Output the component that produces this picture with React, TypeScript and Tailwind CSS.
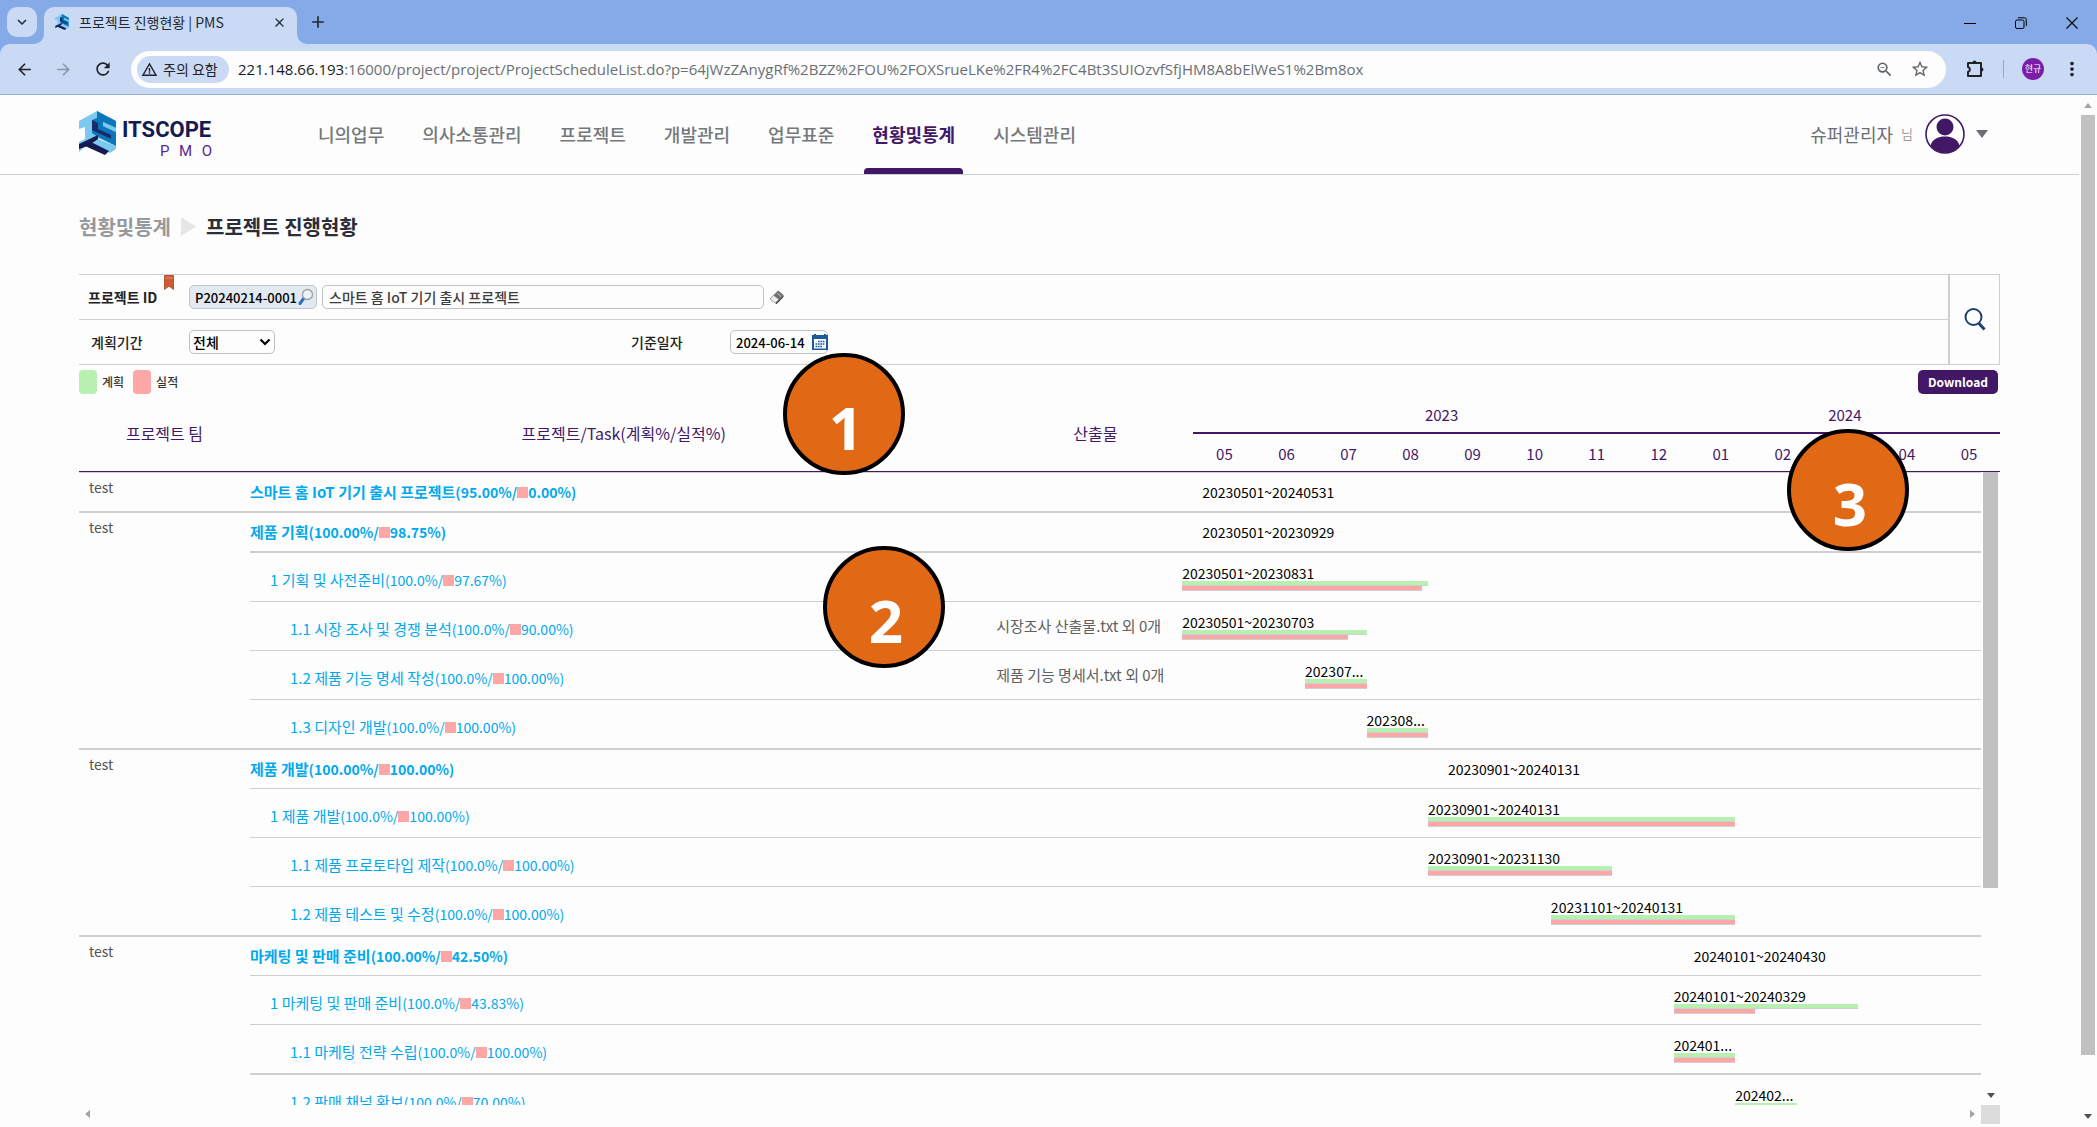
import React from "react";
import {
  MdArrowBack,
  MdArrowForward,
  MdClose,
  MdKeyboardArrowDown,
  MdAdd,
  MdMoreVert,
  MdRefresh,
  MdStarBorder,
  MdWarningAmber,
  MdZoomOut,
} from "react-icons/md";

const KR = "font-['Noto_Sans_CJK_KR','Noto_Sans',sans-serif]";

function CubeMark({ className }: { className: string }) {
  return (
    <svg viewBox="0 0 37 44" className={className} aria-hidden="true">
      <path d="M0 10 L18 0 L37 10 V35 L19 27 L13 29 L0 41 V31 L6 28 V16 L0 18 Z" fill="#7cc8f0" />
      <path d="M18 0 L37 10 L37 17 L24 11 L24 15 L37 21 L37 35 L19 26 L13 22 L13 9 L18 7 Z" fill="#0a77b8" />
      <path d="M13 9 L19 12 L19 18 L32 24 L32 28 L13 19 Z" fill="#1a2a6c" />
      <path d="M24 11 L37 17 L37 21 L24 15 Z" fill="#7cc8f0" />
      <path d="M0 33 L19 24 L19 29 L6 36 L0 38 Z" fill="#141b52" />
      <path d="M19 28 L37 35 L37 38 L31 42 L19 36 L12 33 Z" fill="#7cc8f0" />
      <path d="M12 31 L30 40 L26 44 L6 35 Z" fill="#141b52" />
    </svg>
  );
}

function TabStrip() {
  return (
    <div className="flex h-11 items-end bg-[#84abe8] text-[#1f2937]">
      <button aria-label="탭 검색" className="mb-[7px] ml-[7px] flex h-[30px] w-[30px] items-center justify-center rounded-[10px] bg-[#cadaf5]">
        <MdKeyboardArrowDown size={18} />
      </button>
      <div className="relative ml-[7px] flex h-[37px] w-[253px] items-center rounded-t-[10px] bg-[#cadaf5] pr-[10px] pb-[7px] pl-[11px]">
        <svg viewBox="0 0 10 10" className="absolute bottom-0 -left-[10px] h-[10px] w-[10px]" aria-hidden="true">
          <path d="M10 0 V10 H0 A10 10 0 0 0 10 0 Z" fill="#cadaf5" />
        </svg>
        <svg viewBox="0 0 10 10" className="absolute -right-[10px] bottom-0 h-[10px] w-[10px]" aria-hidden="true">
          <path d="M0 0 V10 H10 A10 10 0 0 1 0 0 Z" fill="#cadaf5" />
        </svg>
        <CubeMark className="h-4 w-[14px]" />
        <span className="ml-[10px] flex-1 text-sm">프로젝트 진행현황 | PMS</span>
        <button aria-label="탭 닫기" className="flex h-4 w-4 items-center justify-center">
          <MdClose size={15} />
        </button>
      </div>
      <button aria-label="새 탭" className="mb-3 ml-[11px]">
        <MdAdd size={20} />
      </button>
      <div className="mr-[16px] mb-3 ml-auto flex items-center gap-[33px] text-black">
        <button aria-label="최소화" className="flex h-[18px] w-[18px] items-center justify-center">
          <span className="h-px w-3 bg-black" />
        </button>
        <button aria-label="이전 크기로 복원" className="flex h-[18px] w-[18px] items-center justify-center">
          <svg viewBox="0 0 12 12" className="h-3 w-3" fill="none" stroke="currentColor">
            <rect x="0.5" y="3" width="8.5" height="8.5" rx="1.5" />
            <path d="M3 0.8 H9.5 A1.8 1.8 0 0 1 11.3 2.6 V9" />
          </svg>
        </button>
        <button aria-label="닫기" className="flex h-[18px] w-[18px] items-center justify-center">
          <svg viewBox="0 0 12 12" className="h-3 w-3" fill="none" stroke="currentColor" strokeWidth="1.1">
            <path d="M0.5 0.5 L11.5 11.5 M11.5 0.5 L0.5 11.5" />
          </svg>
        </button>
      </div>
    </div>
  );
}

function Toolbar() {
  return (
    <div className="bg-[#84abe8]">
      <div className="flex h-[51px] items-center rounded-t-[10px] border-b border-[#9badd6] bg-[#cadaf5] pr-[14px] pl-[15px] text-[#1f2328]">
        <button aria-label="뒤로">
          <MdArrowBack size={19} />
        </button>
        <button aria-label="앞으로" className="ml-5 text-[#8a96ad]">
          <MdArrowForward size={19} />
        </button>
        <button aria-label="새로고침" className="ml-5">
          <MdRefresh size={20} />
        </button>
        <div className="ml-[18px] flex h-[37px] min-w-0 flex-1 items-center rounded-full bg-[#fdfdfd] pr-4 pl-[6px]">
          <button className="flex h-[27px] w-[92px] shrink-0 items-center gap-[5px] rounded-full bg-[#cadaf5] pl-1 text-sm">
            <MdWarningAmber size={17} />
            주의 요함
          </button>
          <p className="ml-[9px] min-w-0 flex-1 truncate font-['Open_Sans','Noto_Sans',sans-serif] text-[15px] text-[#6b6f75]">
            <span className="text-[#1b1b1f]">221.148.66.193</span>
            :16000/project/project/ProjectScheduleList.do?p=64jWzZAnygRf%2BZZ%2FOU%2FOXSrueLKe%2FR4%2FC4Bt3SUIOzvfSfjHM8A8bElWeS1%2Bm8ox
          </p>
          <button aria-label="축소" className="text-[#5f6368]">
            <MdZoomOut size={19} />
          </button>
          <button aria-label="북마크" className="ml-4 text-[#5f6368]">
            <MdStarBorder size={20} />
          </button>
        </div>
        <button aria-label="확장 프로그램" className="ml-[19px]">
          <svg viewBox="0 0 20 20" className="h-5 w-5" fill="none" stroke="currentColor" strokeWidth="2" strokeLinejoin="round">
            <path d="M3 4 H16 V17 H3 V13 A2.6 2.6 0 0 0 3 8 Z" />
            <path d="M7.5 3.5 A2 2 0 0 1 11.5 3.5 Z M16.5 8.5 A2 2 0 0 1 16.5 12.5 Z" fill="currentColor" stroke="none" />
          </svg>
        </button>
        <span className="ml-[18px] h-[18px] w-px bg-[#84abe8]" />
        <button className="ml-[18px] flex h-[22px] w-[22px] items-center justify-center rounded-full bg-[#7a1ea8] text-[9px] text-white">현규</button>
        <button aria-label="메뉴" className="ml-[17px]">
          <MdMoreVert size={22} />
        </button>
      </div>
    </div>
  );
}

const NAV = ["니의업무", "의사소통관리", "프로젝트", "개발관리", "업무표준", "현황및통계", "시스템관리"];
const ACTIVE = "현황및통계";

function Header() {
  return (
    <header className="flex h-20 items-center border-b border-[#cdd0d0] px-[79px]">
      <a href="#" aria-label="ITSCOPE PMO" className="flex w-[134px] items-start">
        <CubeMark className="h-[44px] w-[37px]" />
        <span className="ml-[6px] w-[90px] pt-[5px]">
          <span className="block font-['Liberation_Sans_Narrow','Roboto',sans-serif] text-[22px] leading-[28px] font-bold text-[#151a50]">ITSCOPE</span>
          <span className="ml-[38px] flex justify-between font-['Roboto',sans-serif] text-[15px] leading-[14px] text-[#5c2391]">
            <span>P</span>
            <span>M</span>
            <span>O</span>
          </span>
        </span>
      </a>
      <nav className="ml-[97px] h-full">
        <ul className="flex h-full gap-[22px]">
          {NAV.map((item) => (
            <li key={item} className="relative">
              <a
                href="#"
                className={
                  item === ACTIVE
                    ? "flex h-full items-center px-2 pb-0.5 text-lg font-bold text-[#421866]"
                    : "flex h-full items-center px-2 pb-0.5 text-lg font-medium text-[#74787c]"
                }
              >
                {item}
              </a>
              {item === ACTIVE && <span className="absolute inset-x-0 bottom-0 h-[6px] rounded-t bg-[#421866]" />}
            </li>
          ))}
        </ul>
      </nav>
      <button className="mr-3 ml-auto flex items-center pb-0.5 text-[#6b6e72]">
        <span className="text-lg">슈퍼관리자</span>
        <span className="ml-2 text-[13px] text-[#9a9da0]">님</span>
        <svg viewBox="0 0 40 40" className="ml-3 h-10 w-10" aria-hidden="true">
          <circle cx="20" cy="20" r="19" fill="#fff" stroke="#421866" strokeWidth="1.6" />
          <ellipse cx="20" cy="13" rx="8.5" ry="8.5" fill="#421866" />
          <path d="M5.5 32 C7 25 13 22.5 20 22.5 C27 22.5 33 25 34.5 32 A19 19 0 0 1 5.5 32 Z" fill="#421866" />
        </svg>
        <svg viewBox="0 0 12 8" className="ml-[11px] h-2 w-3" aria-hidden="true">
          <path d="M0 0 H12 L6 8 Z" fill="#6b6e72" />
        </svg>
      </button>
    </header>
  );
}

function SearchForm() {
  return (
    <form className="flex border border-l-0 border-[#cdd0d0] text-sm font-medium text-[#222]">
      <div className="flex-1">
        <div className="flex h-[45px] items-center border-b border-[#cdd0d0]">
          <div className="relative w-[110px] pl-[9px]">
            <label htmlFor="pid" className="font-bold">
              프로젝트 ID
            </label>
            <svg viewBox="0 0 10 15" className="absolute top-[-12px] right-[15px] h-[15px] w-[10px]" aria-hidden="true">
              <path d="M0.5 0.5 H9.5 V14.5 L5 11 L0.5 14.5 Z" fill="#cf5a33" stroke="#a8401f" strokeWidth="0.8" />
              <path d="M1 3 H9" stroke="#e58a63" />
            </svg>
          </div>
          <div className="relative w-32">
            <input id="pid" readOnly defaultValue="P20240214-0001" className="h-6 w-full rounded-[5px] border border-[#bfc5ca] bg-[#e2e9f0] pl-[5px] text-[13px] text-black" />
            <svg viewBox="0 0 16 18" className="absolute top-[3px] right-[3px] h-[18px] w-4" aria-hidden="true">
              <path d="M6 10 L2 15.5" stroke="#2f6fc0" strokeWidth="3" strokeLinecap="round" />
              <circle cx="9.5" cy="6.5" r="5" fill="#eef2f5" stroke="#9aa0a6" strokeWidth="1.3" />
            </svg>
          </div>
          <input aria-label="프로젝트명" defaultValue="스마트 홈 IoT 기기 출시 프로젝트" className="ml-[5px] h-6 w-[442px] rounded-[5px] border border-[#bfc1c4] bg-[#fdfdfd] pl-[6px] text-[#3d3d3d]" />
          <button type="button" aria-label="지우기" className="ml-[5px]">
            <svg viewBox="0 0 16 16" className="h-4 w-4" aria-hidden="true">
              <path d="M1 10 L9 1.5 L14.5 6 L6.5 14 Z" fill="#6e6e6e" />
              <path d="M1 10 L4.5 6.2 L10 10.6 L6.5 14 Z" fill="#efefef" stroke="#8a8a8a" strokeWidth="0.7" />
              <path d="M6.5 14 L14.5 6 V8 L7.5 15.3 Z" fill="#444" />
              <path d="M8 4 L12 7.5" stroke="#c9c9c9" />
            </svg>
          </button>
        </div>
        <div className="flex h-11 items-center">
          <label htmlFor="period" className="w-[110px] pl-3">
            계획기간
          </label>
          <span className="relative w-[86px]">
            <select id="period" className="h-6 w-full appearance-none rounded-[5px] border border-[#bfc1c4] bg-[#fdfdfd] pl-[3px] font-medium text-black">
              <option>전체</option>
            </select>
            <svg viewBox="0 0 12 8" className="pointer-events-none absolute top-2 right-[4px] h-2 w-3" fill="none" stroke="#000" strokeWidth="2.2" aria-hidden="true">
              <path d="M1.5 1.5 L6 6 L10.5 1.5" />
            </svg>
          </span>
          <label htmlFor="base" className="ml-[356px] w-[99px]">
            기준일자
          </label>
          <div className="relative w-[98px]">
            <input id="base" defaultValue="2024-06-14" className="h-6 w-full rounded-[5px] border border-[#bfc1c4] bg-[#fdfdfd] pl-[5px] text-[13px] text-black" />
            <svg viewBox="0 0 16 16" className="absolute top-1 right-0 h-4 w-4" aria-hidden="true">
              <rect x="0" y="1" width="16" height="15" fill="#1d5a9c" />
              <path d="M3 0 V2 M13 0 V2" stroke="#1d5a9c" strokeWidth="2" />
              <rect x="2" y="5" width="12" height="9.5" fill="#fff" />
              <path d="M6 7.5 H13 M3.5 10 H13 M3.5 12.5 H10" stroke="#1d5a9c" strokeWidth="1.6" strokeDasharray="1.7 0.7" />
            </svg>
          </div>
        </div>
      </div>
      <button type="button" aria-label="조회" className="flex w-[51px] items-center justify-center border-l-2 border-[#cdd0d0]">
        <svg viewBox="0 0 22 24" className="h-6 w-[22px]" fill="none" stroke="#1f3f6e" aria-hidden="true">
          <circle cx="9.5" cy="9" r="8" strokeWidth="2" />
          <path d="M15 15.5 L20.5 21.5" strokeWidth="3" />
        </svg>
      </button>
    </form>
  );
}

const MONTHS = ["05", "06", "07", "08", "09", "10", "11", "12", "01", "02", "03", "04", "05"];

type Task = {
  level: number;
  name: string;
  plan: string;
  done: string;
  file?: string;
  dates: string;
  start: number;
  span: number;
  thick?: boolean;
};

const TEAMS: { team: string; tasks: Task[] }[] = [
  {
    team: "test",
    tasks: [{ level: 0, name: "스마트 홈 IoT 기기 출시 프로젝트", plan: "95.00", done: "0.00", dates: "20230501~20240531", start: 0, span: 13 }],
  },
  {
    team: "test",
    tasks: [
      { level: 0, name: "제품 기획", plan: "100.00", done: "98.75", dates: "20230501~20230929", start: 0, span: 5, thick: true },
      { level: 1, name: "1 기획 및 사전준비", plan: "100.0", done: "97.67", dates: "20230501~20230831", start: 0, span: 4 },
      { level: 2, name: "1.1 시장 조사 및 경쟁 분석", plan: "100.0", done: "90.00", file: "시장조사 산출물.txt 외 0개", dates: "20230501~20230703", start: 0, span: 3 },
      { level: 2, name: "1.2 제품 기능 명세 작성", plan: "100.0", done: "100.00", file: "제품 기능 명세서.txt 외 0개", dates: "202307...", start: 2, span: 1 },
      { level: 2, name: "1.3 디자인 개발", plan: "100.0", done: "100.00", dates: "202308...", start: 3, span: 1 },
    ],
  },
  {
    team: "test",
    tasks: [
      { level: 0, name: "제품 개발", plan: "100.00", done: "100.00", dates: "20230901~20240131", start: 4, span: 5 },
      { level: 1, name: "1 제품 개발", plan: "100.0", done: "100.00", dates: "20230901~20240131", start: 4, span: 5 },
      { level: 2, name: "1.1 제품 프로토타입 제작", plan: "100.0", done: "100.00", dates: "20230901~20231130", start: 4, span: 3 },
      { level: 2, name: "1.2 제품 테스트 및 수정", plan: "100.0", done: "100.00", dates: "20231101~20240131", start: 6, span: 3 },
    ],
  },
  {
    team: "test",
    tasks: [
      { level: 0, name: "마케팅 및 판매 준비", plan: "100.00", done: "42.50", dates: "20240101~20240430", start: 8, span: 4 },
      { level: 1, name: "1 마케팅 및 판매 준비", plan: "100.0", done: "43.83", dates: "20240101~20240329", start: 8, span: 3 },
      { level: 2, name: "1.1 마케팅 전략 수립", plan: "100.0", done: "100.00", dates: "202401...", start: 8, span: 1, thick: true },
      { level: 2, name: "1.2 판매 채널 확보", plan: "100.0", done: "70.00", dates: "202402...", start: 9, span: 1 },
    ],
  },
];

const INDENT = ["", "pl-5", "pl-10"];

function Gantt({ task }: { task: Task }) {
  const offset = { marginLeft: `${(task.start / MONTHS.length) * 100}%` };
  if (task.level === 0) {
    return (
      <div className="flex h-[38px] items-center text-sm text-black">
        <span className="pl-5" style={offset}>
          {task.dates}
        </span>
      </div>
    );
  }
  return (
    <div className="h-12 pt-3">
      <div style={{ ...offset, width: `${(task.span / MONTHS.length) * 100}%` }}>
        <p className="h-4 text-sm leading-4 whitespace-nowrap text-black">{task.dates}</p>
        <div className="h-[5px] border-b border-[#cdd0d0] bg-[#b7f0b1]" />
        <div className="h-[5px] border-b border-[#cdd0d0] bg-[#ffa6a6]" style={{ width: `${task.done}%` }} />
      </div>
    </div>
  );
}

function Schedule() {
  return (
    <section className="flex min-h-0 flex-1 flex-col">
      <table className="w-full table-fixed border-separate border-spacing-0 text-[#421866]">
        <colgroup>
          <col className="w-[171px]" />
          <col />
          <col className="w-[196px]" />
          {MONTHS.map((_, i) => (
            <col key={i} className="w-[3.23%]" />
          ))}
        </colgroup>
        <thead className="text-base">
          <tr>
            <th rowSpan={2} className="border-b border-[#421866] p-0 font-normal">프로젝트 팀</th>
            <th rowSpan={2} className="border-b border-[#421866] p-0 font-normal">프로젝트/Task(계획%/실적%)</th>
            <th rowSpan={2} className="border-b border-[#421866] p-0 font-normal">산출물</th>
            <th colSpan={8} className="h-10 border-b-2 border-[#421866] p-0 pt-1 text-[15px] font-normal">2023</th>
            <th colSpan={5} className="h-10 border-b-2 border-[#421866] p-0 pt-1 text-[15px] font-normal">2024</th>
          </tr>
          <tr>
            {MONTHS.map((m, i) => (
              <th key={i} className="h-[38px] border-b border-[#421866] p-0 pt-1 text-[15px] font-normal">
                {m}
              </th>
            ))}
          </tr>
        </thead>
      </table>
      <div className="flex min-h-0 flex-1 pr-[2px]">
        <div className="min-w-0 flex-1 overflow-hidden border-t border-[#cdd0d0]">
          <table className="w-full table-fixed border-separate border-spacing-0 text-left">
            <colgroup>
              <col className="w-[171px]" />
              <col />
              <col className="w-[186px]" />
              <col className="w-[42%]" />
            </colgroup>
            {TEAMS.map((group, g) => (
              <tbody key={g}>
                {group.tasks.map((task, i) => {
                  const last = i === group.tasks.length - 1;
                  const line = last || task.thick ? "border-b-2 border-[#cdd0d0] p-0" : "border-b border-[#cdd0d0] p-0";
                  return (
                    <tr key={i}>
                      {i === 0 && (
                        <td rowSpan={group.tasks.length} className="border-b-2 border-[#cdd0d0] p-0 pt-1 pl-[10px] align-top text-sm text-[#555]">
                          {group.team}
                        </td>
                      )}
                      <td className={line}>
                        <div className={INDENT[task.level]}>
                          <a
                            href="#"
                            className={
                              task.level === 0
                                ? "flex h-[38px] items-center text-sm font-bold text-[#00a9ee]"
                                : "flex h-12 items-center pt-1.5 text-sm text-[#00a9ee]"
                            }
                          >
                            <span className="text-[15px]">{task.name}</span>({task.plan}%/
                            <span className="h-[11px] w-[11px] bg-[#ffa6a6]" />
                            {task.done}%)
                          </a>
                        </div>
                      </td>
                      <td className={line}>
                        <p className="text-[15px] whitespace-nowrap text-[#5f6062]">{task.file}</p>
                      </td>
                      <td className={line}>
                        <Gantt task={task} />
                      </td>
                    </tr>
                  );
                })}
              </tbody>
            ))}
          </table>
        </div>
        <div className="ml-[2px] flex w-[15px] flex-col items-center justify-between pb-[7px]">
          <div className="h-[416px] w-full bg-[#c1c1c1]" />
          <svg viewBox="0 0 8 5" className="h-[5px] w-2" aria-hidden="true">
            <path d="M0 0 H8 L4 5 Z" fill="#505050" />
          </svg>
        </div>
      </div>
      <div className="flex h-[22px] items-start">
        <div className="flex flex-1 items-center justify-between px-[6px] pt-[5px]">
          <svg viewBox="0 0 5 8" className="h-2 w-[5px]" aria-hidden="true">
            <path d="M5 0 V8 L0 4 Z" fill="#a3a3a3" />
          </svg>
          <svg viewBox="0 0 5 8" className="h-2 w-[5px]" aria-hidden="true">
            <path d="M0 0 V8 L5 4 Z" fill="#a3a3a3" />
          </svg>
        </div>
        <div className="h-[19px] w-[19px] bg-[#dcdcdc]" />
      </div>
    </section>
  );
}

function Marker({ n, place }: { n: number; place: string }) {
  return (
    <div className={`absolute flex h-[122px] w-[122px] items-center justify-center rounded-full border-4 border-black bg-[#e16814] pt-[26px] pl-1 font-['Noto_Sans',sans-serif] text-[60px] leading-none font-bold text-white ${place}`}>
      {n}
    </div>
  );
}

export default function App() {
  return (
    <div className={`relative flex h-screen flex-col overflow-hidden bg-[#fdfdfd] ${KR}`}>
      <TabStrip />
      <Toolbar />
      <div className="flex min-h-0 flex-1">
        <div className="flex min-w-0 flex-1 flex-col">
          <Header />
          <main className="flex min-h-0 flex-1 flex-col px-[79px]">
            <div className="flex h-[99px] items-center pt-1 text-xl font-bold">
              <span className="text-[#97999c]">현황및통계</span>
              <svg viewBox="0 0 15 19" className="ml-[10px] h-[19px] w-[15px]" aria-hidden="true">
                <path d="M0 0 L15 9.5 L0 19 Z" fill="#e4e6e8" />
              </svg>
              <h1 className="ml-[10px] text-[#2a2d3a]">프로젝트 진행현황</h1>
            </div>
            <SearchForm />
            <div className="flex h-[29px] items-end text-xs font-medium text-[#333]">
              <span className="h-6 w-[18px] rounded bg-[#b7f0b1]" />
              <span className="ml-[5px] leading-6">계획</span>
              <span className="ml-[9px] h-6 w-[18px] rounded bg-[#ffa6a6]" />
              <span className="ml-[5px] leading-6">실적</span>
              <button className="mr-[2px] ml-auto h-6 w-20 rounded-[5px] bg-[#421866] text-xs font-bold text-white">Download</button>
            </div>
            <Schedule />
          </main>
        </div>
        <div className="flex w-[18px] flex-col items-center py-2">
          <svg viewBox="0 0 8 5" className="h-[5px] w-2" aria-hidden="true">
            <path d="M0 5 H8 L4 0 Z" fill="#a3a3a3" />
          </svg>
          <div className="mt-[7px] mb-[59px] w-[14px] flex-1 bg-[#c1c1c1]" />
          <svg viewBox="0 0 8 5" className="h-[5px] w-2" aria-hidden="true">
            <path d="M0 0 H8 L4 5 Z" fill="#505050" />
          </svg>
        </div>
      </div>
      <Marker n={1} place="left-[783px] top-[353px]" />
      <Marker n={2} place="left-[823px] top-[546px]" />
      <Marker n={3} place="left-[1787px] top-[429px]" />
    </div>
  );
}
